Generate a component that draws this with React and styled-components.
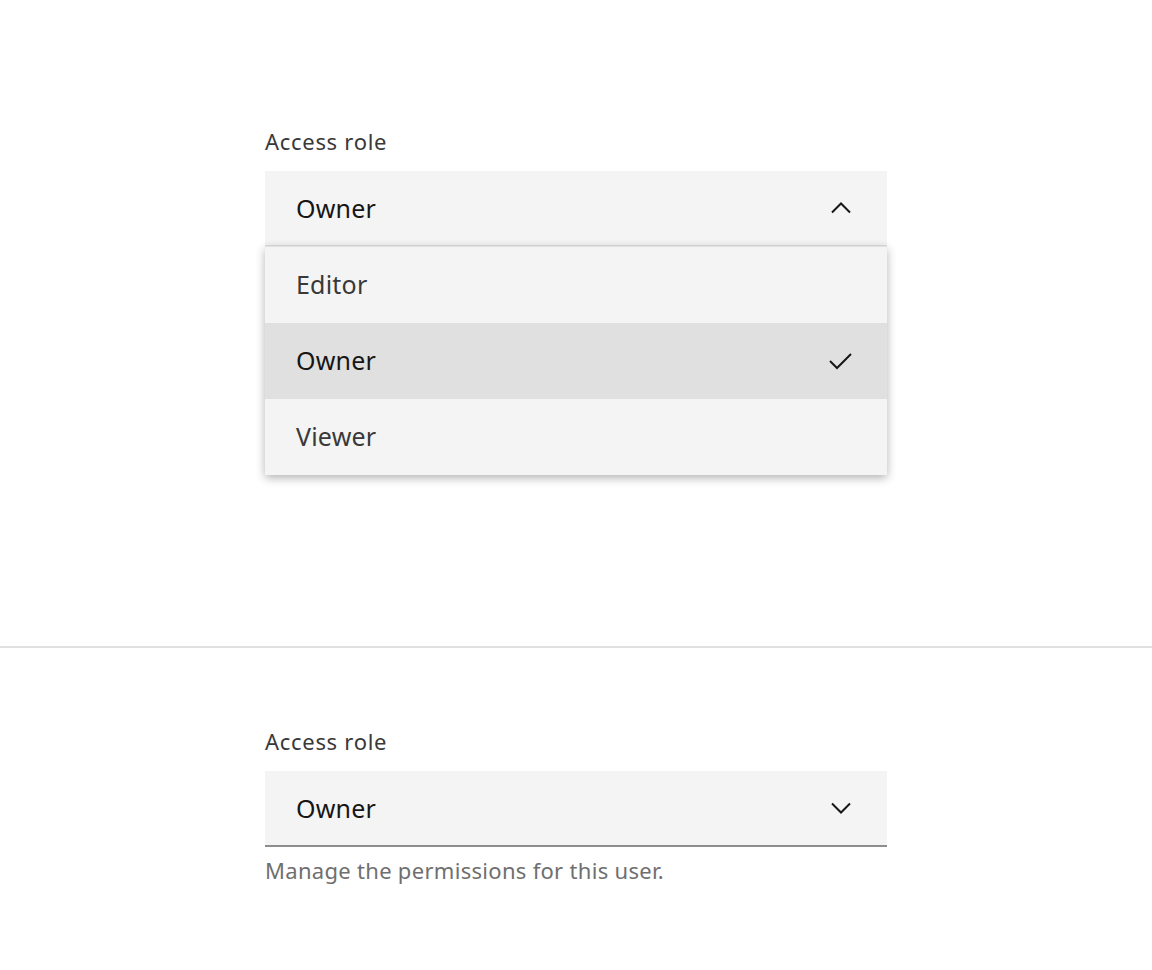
import React from "react";
import styled, { createGlobalStyle } from "styled-components";

const Global = createGlobalStyle`
  html, body { margin: 0; padding: 0; background: #ffffff; }
  body { font-family: "Noto Sans", "Open Sans", sans-serif; -webkit-font-smoothing: antialiased; }
  * { box-sizing: border-box; }
`;

const Page = styled.div`
  display: flex;
  flex-direction: column;
  width: 1152px;
  min-height: 970px;
`;

const Section = styled.section`
  height: ${(p) => p.$height}px;
  padding: ${(p) => p.$top}px 0 0 265px;
  border-bottom: ${(p) => (p.$divider ? "2px solid #e0e0e0" : "none")};
`;

const Field = styled.div`
  width: 622px;
  display: flex;
  flex-direction: column;
`;

const Label = styled.label`
  font-size: 22px;
  line-height: 28px;
  color: #393939;
  letter-spacing: 0.7px;
  margin-bottom: 16px;
`;

const Wrapper = styled.div`
  position: relative;
`;

const Trigger = styled.button`
  width: 100%;
  height: 76px;
  display: flex;
  align-items: center;
  justify-content: space-between;
  padding: 0 34px 0 31px;
  border: none;
  border-bottom: 2px solid ${(p) => (p.$open ? "#e0e0e0" : "#8d8d8d")};
  background: #f4f4f4;
  font-family: inherit;
  font-size: 25px;
  color: #161616;
  letter-spacing: 0.2px;
  cursor: pointer;
  text-align: left;
`;

const Menu = styled.ul`
  position: absolute;
  left: 0;
  right: 0;
  top: 75px;
  margin: 0;
  padding: 0;
  list-style: none;
  background: #f4f4f4;
  border-top: 1px solid #e0e0e0;
  box-shadow: 0 3px 9px rgba(0, 0, 0, 0.3);
  z-index: 2;
`;

const Item = styled.li`
  height: 76px;
  display: flex;
  align-items: center;
  justify-content: space-between;
  padding: 0 34px 2px 31px;
  font-size: 25px;
  letter-spacing: 0.2px;
  background: ${(p) => (p.$selected ? "#e0e0e0" : "#f4f4f4")};
  color: ${(p) => (p.$selected ? "#161616" : "#393939")};
`;

const Helper = styled.div`
  margin-top: 9px;
  font-size: 22px;
  line-height: 28px;
  color: #6f6f6f;
  letter-spacing: 0.3px;
`;

const Chevron = ({ up }) => (
  <svg width="24" height="24" viewBox="0 0 24 24" aria-hidden="true">
    <polyline
      points={up ? "3,16.5 12,7.5 21,16.5" : "3,7.5 12,16.5 21,7.5"}
      fill="none"
      stroke="#161616"
      strokeWidth="2"
    />
  </svg>
);

const Check = () => (
  <svg width="24" height="24" viewBox="0 0 24 24" aria-hidden="true">
    <polyline points="1,13 8,20 22,6" fill="none" stroke="#161616" strokeWidth="2" />
  </svg>
);

const options = ["Editor", "Owner", "Viewer"];

export default function App() {
  return (
    <Page>
      <Global />
      <Section $height={648} $top={127} $divider>
        <Field>
          <Label>Access role</Label>
          <Wrapper>
            <Trigger $open>
              <span>Owner</span>
              <Chevron up />
            </Trigger>
            <Menu>
              {options.map((o) => (
                <Item key={o} $selected={o === "Owner"}>
                  <span>{o}</span>
                  {o === "Owner" && <Check />}
                </Item>
              ))}
            </Menu>
          </Wrapper>
        </Field>
      </Section>
      <Section $height={322} $top={79}>
        <Field>
          <Label>Access role</Label>
          <Wrapper>
            <Trigger>
              <span>Owner</span>
              <Chevron />
            </Trigger>
          </Wrapper>
          <Helper>Manage the permissions for this user.</Helper>
        </Field>
      </Section>
    </Page>
  );
}
